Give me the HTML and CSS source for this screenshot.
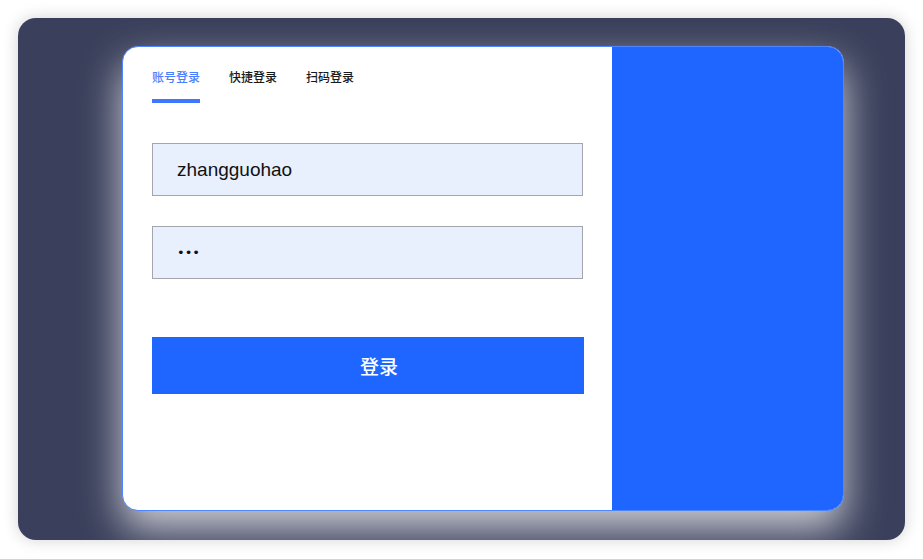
FILE: index.html
```html
<!DOCTYPE html>
<html lang="zh">
<head>
<meta charset="utf-8">
<link rel="stylesheet" href="styles.css">
</head>
<body>
<div class="stage">
  <div class="card">
    <div class="left">
      <div class="tabs">
        <div class="tab active">账号登录</div>
        <div class="tab">快捷登录</div>
        <div class="tab">扫码登录</div>
      </div>
      <div class="field"><span class="value">zhangguohao</span></div>
      <div class="field pw"><span class="dots">•••</span></div>
      <button class="btn">登录</button>
    </div>
    <div class="right"></div>
  </div>
</div>
</body>
</html>
```

FILE: styles.css
```css
html, body {
  margin: 0;
  padding: 0;
  background: #ffffff;
}
body {
  padding: 18px;
  width: 887px;
  font-family: "Noto Sans CJK SC", "Liberation Sans", sans-serif;
}
.stage {
  width: 887px;
  height: 522px;
  box-sizing: border-box;
  background: #3a3f5b;
  border-radius: 18px;
  box-shadow: 0 0 16px rgba(0, 0, 0, 0.18);
  padding: 28px 0 0 104px;
  overflow: hidden;
}
.card {
  width: 722px;
  height: 465px;
  box-sizing: border-box;
  display: flex;
  border: 1px solid #4d86ff;
  border-radius: 16px;
  overflow: hidden;
  background: #ffffff;
  box-shadow: 0 18px 40px rgba(255, 255, 255, 0.75);
}
.left {
  width: 489px;
  padding: 0 0 0 29px;
  box-sizing: border-box;
  display: flex;
  flex-direction: column;
  align-items: flex-start;
}
.right {
  flex: 1;
  background: #1e66ff;
}
.tabs {
  display: flex;
  gap: 29px;
  margin-top: 20px;
}
.tab {
  font-size: 12px;
  font-weight: 500;
  line-height: 20px;
  color: #1a1a1a;
  padding: 0 0 12px;
  border-bottom: 4px solid transparent;
}
.tab.active {
  color: #4a80ff;
  border-bottom-color: #3c78ff;
}
.field {
  width: 431px;
  height: 53px;
  box-sizing: border-box;
  margin-top: 40px;
  border: 1px solid #a3a6ad;
  background: #e8f0fe;
  display: flex;
  align-items: center;
  padding-left: 24px;
}
.field.pw {
  margin-top: 30px;
}
.value {
  font-family: "Liberation Sans", Arial, sans-serif;
  font-size: 19px;
  color: #111;
}
.dots {
  font-family: "DejaVu Sans", sans-serif;
  font-size: 13px;
  color: #111;
}
.btn {
  width: 432px;
  height: 57px;
  margin-top: 58px;
  border: none;
  background: #1e66ff;
  color: #ffffff;
  font-family: "Noto Sans CJK SC", sans-serif;
  font-size: 19px;
  font-weight: 500;
  padding: 0 0 0 22px;
}
```
